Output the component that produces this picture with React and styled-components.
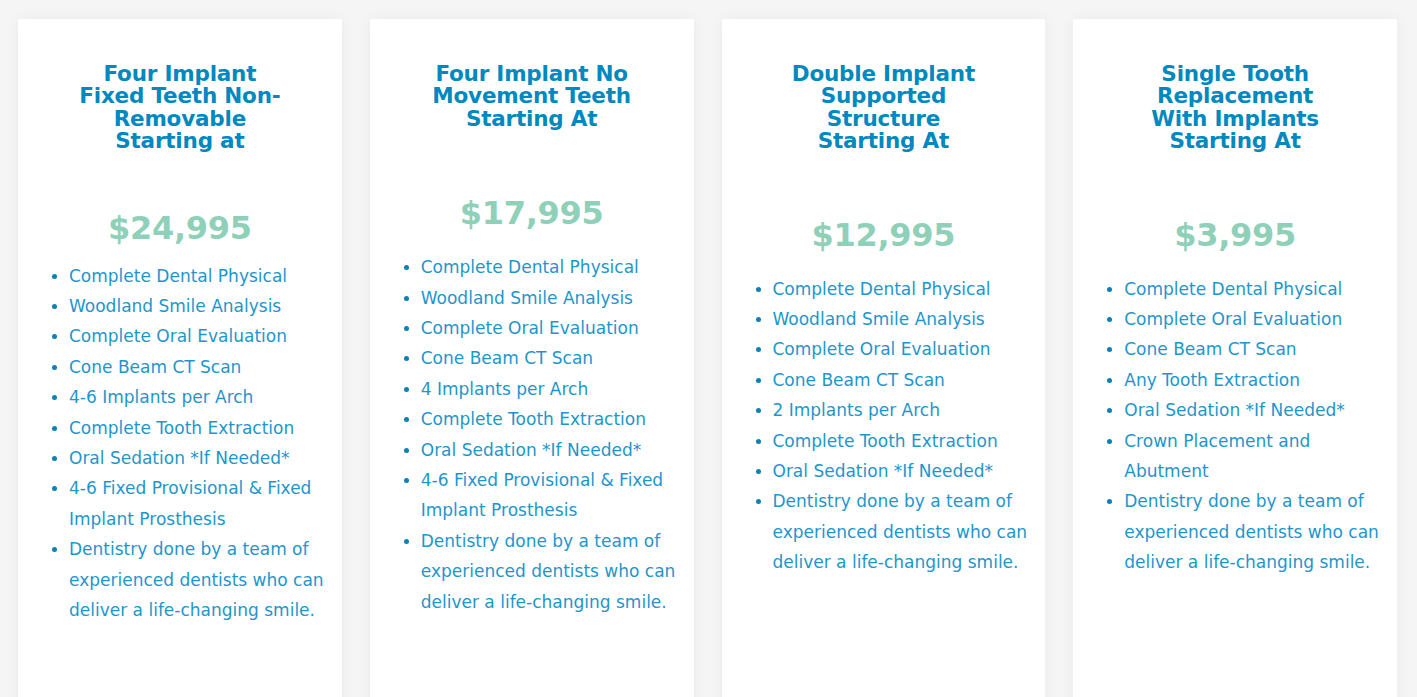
import React from "react";
import styled, { createGlobalStyle } from "styled-components";

const Global = createGlobalStyle`
  html, body { margin: 0; padding: 0; background: #f5f5f5; }
  body { font-family: "DejaVu Sans", "Open Sans", sans-serif; overflow: hidden; }
  * { box-sizing: border-box; }
`;

const Page = styled.div`
  display: grid;
  grid-template-columns: repeat(4, 1fr);
  column-gap: 28px;
  padding: 19px 20px 0 18px;
  height: 697px;
  background: #f5f5f5;
`;

const Card = styled.div`
  background: #ffffff;
  box-shadow: 0 0 14px rgba(0, 0, 0, 0.05);
  padding: 44px 12px 0 0;
  min-height: 700px;
  display: flex;
  flex-direction: column;
`;

const Title = styled.h3`
  margin: 0;
  text-align: center;
  padding-left: 12px;
  color: #0088c0;
  font-family: "DejaVu Sans", sans-serif;
  font-weight: 700;
  font-size: 21.5px;
  line-height: 22.4px;
  letter-spacing: -0.2px;
`;

const Price = styled.div`
  margin-top: ${(p) => p.$top}px;
  padding-left: 12px;
  text-align: center;
  color: #8fd0b9;
  font-family: "DejaVu Sans", sans-serif;
  font-weight: 700;
  font-size: 32px;
  line-height: 42px;
  letter-spacing: -0.3px;
`;

const List = styled.ul`
  margin: ${(p) => p.$top}px 0 0 0;
  padding: 0 0 0 51px;
  list-style: disc;
  color: #1e96cc;
  font-family: "DejaVu Sans", sans-serif;
  font-size: 17px;
  line-height: 30.4px;
`;

const Item = styled.li`
  &::marker { color: #0a80b9; font-size: 16px; }
`;

const plans = [
  {
    title: ["Four Implant", "Fixed Teeth Non-", "Removable", "Starting at"],
    price: "$24,995",
    priceTop: 54,
    listTop: 12,
    items: [
      "Complete Dental Physical",
      "Woodland Smile Analysis",
      "Complete Oral Evaluation",
      "Cone Beam CT Scan",
      "4-6 Implants per Arch",
      "Complete Tooth Extraction",
      "Oral Sedation *If Needed*",
      "4-6 Fixed Provisional & Fixed Implant Prosthesis",
      "Dentistry done by a team of experienced dentists who can deliver a life-changing smile.",
    ],
  },
  {
    title: ["Four Implant No", "Movement Teeth", "Starting At"],
    price: "$17,995",
    priceTop: 62,
    listTop: 18,
    items: [
      "Complete Dental Physical",
      "Woodland Smile Analysis",
      "Complete Oral Evaluation",
      "Cone Beam CT Scan",
      "4 Implants per Arch",
      "Complete Tooth Extraction",
      "Oral Sedation *If Needed*",
      "4-6 Fixed Provisional & Fixed Implant Prosthesis",
      "Dentistry done by a team of experienced dentists who can deliver a life-changing smile.",
    ],
  },
  {
    title: ["Double Implant", "Supported", "Structure", "Starting At"],
    price: "$12,995",
    priceTop: 61,
    listTop: 18,
    items: [
      "Complete Dental Physical",
      "Woodland Smile Analysis",
      "Complete Oral Evaluation",
      "Cone Beam CT Scan",
      "2 Implants per Arch",
      "Complete Tooth Extraction",
      "Oral Sedation *If Needed*",
      "Dentistry done by a team of experienced dentists who can deliver a life-changing smile.",
    ],
  },
  {
    title: ["Single Tooth", "Replacement", "With Implants", "Starting At"],
    price: "$3,995",
    priceTop: 61,
    listTop: 18,
    items: [
      "Complete Dental Physical",
      "Complete Oral Evaluation",
      "Cone Beam CT Scan",
      "Any Tooth Extraction",
      "Oral Sedation *If Needed*",
      "Crown Placement and Abutment",
      "Dentistry done by a team of experienced dentists who can deliver a life-changing smile.",
    ],
  },
];

export default function App() {
  return (
    <>
      <Global />
      <Page>
        {plans.map((p, i) => (
          <Card key={i}>
            <Title>
              {p.title.map((l, j) => (
                <React.Fragment key={j}>
                  {l}
                  {j < p.title.length - 1 && <br />}
                </React.Fragment>
              ))}
            </Title>
            <Price $top={p.priceTop}>{p.price}</Price>
            <List $top={p.listTop}>
              {p.items.map((t, k) => (
                <Item key={k}>{t}</Item>
              ))}
            </List>
          </Card>
        ))}
      </Page>
    </>
  );
}
